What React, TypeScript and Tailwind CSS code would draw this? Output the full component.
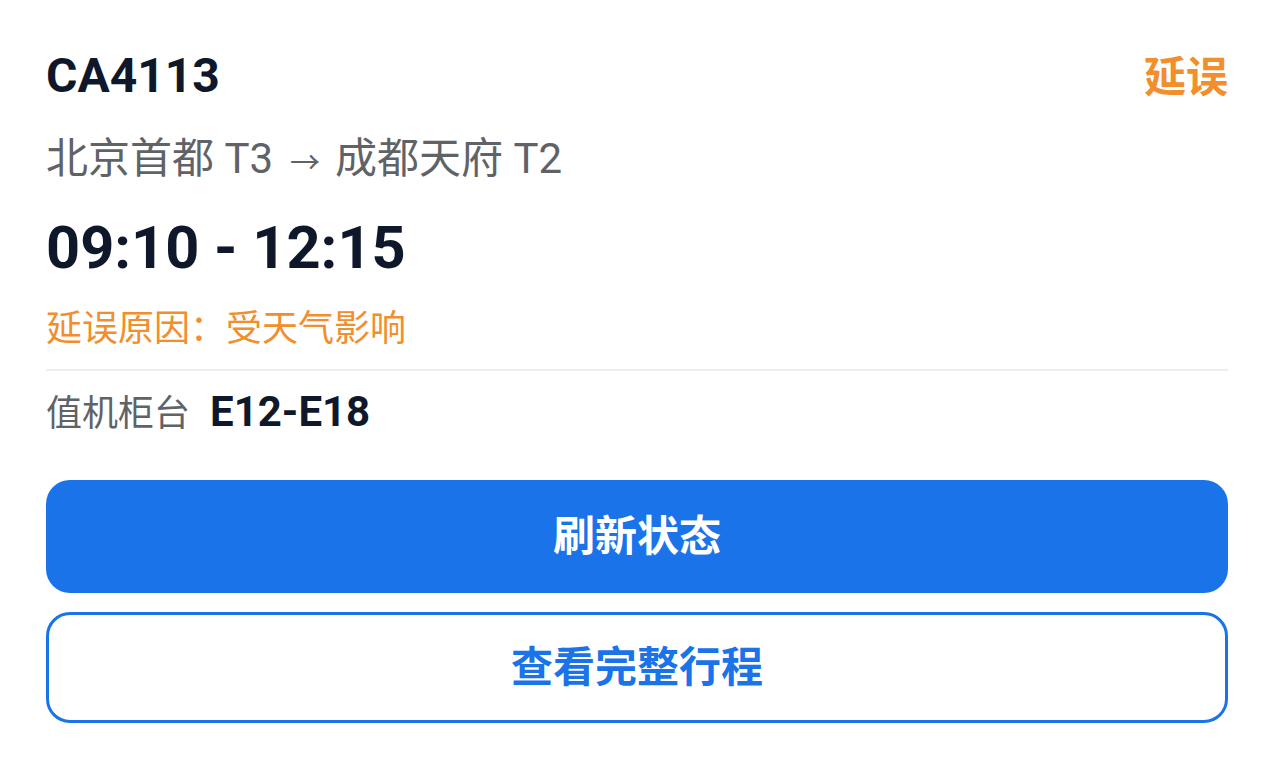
const flight = {
  no: "CA4113",
  status: "延误",
  from: "北京首都 T3",
  to: "成都天府 T2",
  depart: "09:10",
  arrive: "12:15",
  reason: "延误原因：受天气影响",
  counter: "E12-E18",
};

export default function App() {
  return (
    <div className="min-h-screen bg-white px-[46px] pt-[48px] font-['Roboto','Noto_Sans_CJK_SC',sans-serif]">
      <div className="flex items-start justify-between">
        <h1 className="text-[48px] leading-[56px] font-bold text-slate-900">
          {flight.no}
        </h1>
        <span className="mt-[3px] text-[42px] leading-[53px] font-bold text-[#f28e2b]">
          {flight.status}
        </span>
      </div>

      <p className="mt-[30px] text-[42px] leading-[50px] text-[#5f6368]">
        {flight.from}
        <span className="ml-[17px] mr-[15px] inline-block text-[30px]">→</span>
        {flight.to}
      </p>

      <p className="mt-[23px] text-[59.5px] leading-[74px] font-bold text-slate-900">
        {flight.depart} - {flight.arrive}
      </p>

      <p className="mt-[22px] text-[36px] leading-[44px] text-[#f28e2b]">
        {flight.reason}
      </p>

      <div className="mt-[18px] h-[2px] bg-[#eeeeee]" />

      <div className="mt-[16px] flex items-baseline gap-[20px] leading-[50px]">
        <span className="text-[36px] text-[#5f6368]">值机柜台</span>
        <span className="text-[42px] font-bold text-slate-900">
          {flight.counter}
        </span>
      </div>

      <div className="mt-[41px] flex flex-col">
        <button className="flex h-[113px] items-center justify-center rounded-[24px] bg-[#1a73e8] text-[42px] font-bold text-white">
          刷新状态
        </button>
        <button className="mt-[19px] flex h-[111px] items-center justify-center rounded-[24px] border-[3px] border-[#1a73e8] bg-white text-[42px] font-bold text-[#1a73e8]">
          查看完整行程
        </button>
      </div>
    </div>
  );
}
